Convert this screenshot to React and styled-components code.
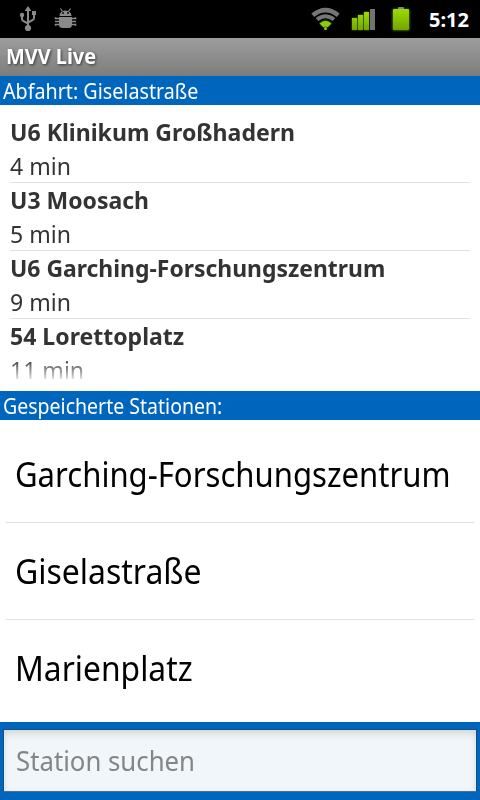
import React from "react";
import styled, { createGlobalStyle } from "styled-components";

const Global = createGlobalStyle`
  * { box-sizing: border-box; }
  body { margin: 0; background: #fff; font-family: "Noto Sans", sans-serif; }
`;

const Screen = styled.div`
  width: 480px;
  height: 800px;
  display: flex;
  flex-direction: column;
  overflow: hidden;
  background: #fff;
`;

/* Condenses a label horizontally to the narrower Android letterforms. */
const Fit = styled.span`
  display: inline-block;
  white-space: nowrap;
  transform-origin: left center;
  transform: scaleX(${p => p.$s});
`;

const Status = styled.header`
  height: 38px;
  background: #000;
  color: #fff;
  display: flex;
  justify-content: space-between;
  padding: 0 9px 0 18px;
`;

const IconGroup = styled.div`
  display: flex;
  gap: ${p => p.$gap || 0}px;
`;

const Glyph = styled.svg`
  display: block;
  width: ${p => p.$w}px;
  height: 38px;
  overflow: visible;
`;

const Clock = styled.time`
  width: 42px;
  margin-left: 3px;
  font-size: 20px;
  font-weight: 700;
  line-height: 39px;
`;

const Title = styled.h1`
  margin: 0;
  height: 38px;
  padding-left: 6px;
  font-size: 21px;
  line-height: 37px;
  color: #fff;
  text-shadow: 1px 1px 3px rgba(0, 0, 0, 0.6);
  background: linear-gradient(#9d9d9d, #7d7d7d);
`;

const Bar = styled.h2`
  margin: 0;
  height: 29px;
  padding-left: 3px;
  font-size: 21px;
  font-weight: 400;
  line-height: 30px;
  color: #fff;
  background: #0065bd;
`;

const Departures = styled.ul`
  margin: 0;
  padding: 10px 10px 0;
  list-style: none;
  height: 286px;
  overflow: hidden;
  mask-image: linear-gradient(#000 254px, rgba(0, 0, 0, 0.12) 275px, transparent 276px);
`;

const Departure = styled.li`
  height: 68px;
  border-bottom: 1px solid #e1e1e1;
  font-size: 24px;
  line-height: 34px;
  color: #333;
`;

const Line = styled.div`
  height: 34px;
  font-weight: ${p => (p.$bold ? 700 : 400)};
`;

const Stations = styled.ul`
  margin: 0;
  padding: 6px 6px 0;
  list-style: none;
  height: 302px;
`;

const Station = styled.li`
  height: 97px;
  padding-left: 9px;
  font-size: 34px;
  line-height: 96px;
  color: #000;
  border-bottom: 1px solid #e1e1e1;
  &:last-child { border-bottom: 0; }
`;

const SearchBar = styled.div`
  height: 78px;
  padding: 7px 3px 8px;
  background: #0065bd;
`;

const Field = styled.div`
  height: 63px;
  padding-left: 12px;
  border: 1px solid #174d80;
  border-bottom-color: #4a7093;
  background: #f1f6fb;
  box-shadow: inset 0 5px 9px -2px rgba(90, 90, 60, 0.2), inset 0 0 7px rgba(90, 90, 60, 0.06);
  font-size: 27px;
  line-height: 62px;
  color: #858585;
`;

const departures = [
  { line: "U6 Klinikum Großhadern", time: "4 min", s: 0.961 },
  { line: "U3 Moosach", time: "5 min", s: 0.958 },
  { line: "U6 Garching-Forschungszentrum", time: "9 min", s: 0.955 },
  { line: "54 Lorettoplatz", time: "11 min", s: 0.96 },
];

const stations = [
  { name: "Garching-Forschungszentrum", s: 0.914 },
  { name: "Giselastraße", s: 0.94 },
  { name: "Marienplatz", s: 0.935 },
];

const Usb = () => (
  <Glyph $w={20} viewBox="18 0 20 38" fill="#8a8a8a">
    <path d="M28 6l3.400 5h-6.800z" />
    <path d="M28 9v17M22 16v3q0 1.500 1.500 2.200L28 23.500M34 14v4q0 1.500-1.500 2.200L28 22.500" fill="none" stroke="#8a8a8a" strokeWidth="2" />
    <circle cx="22" cy="15" r="2.200" />
    <path d="M32 11h4v4h-4z" />
    <circle cx="28" cy="28" r="3.100" />
  </Glyph>
);

const Bug = () => (
  <Glyph $w={22} viewBox="55 0 22 38" fill="#8a8a8a">
    <path d="M59.500 16a6 5.500 0 0 1 12 0z" />
    <path d="M62.500 11.500l-2-3M68.500 11.500l2-3" stroke="#8a8a8a" strokeWidth="1.200" />
    <path d="M59 17h13v7.500q0 3.500-3.500 3.500h-6q-3.500 0-3.500-3.500z" />
    <path d="M59 18.500h-3.500v-1.200M59 21.500h-4M59 24.500h-3.500v1.200M72 18.500h3.500v-1.200M72 21.500h4M72 24.500h3.500v1.200" fill="none" stroke="#8a8a8a" strokeWidth="1.600" />
    <circle cx="63" cy="13" r=".9" fill="#000" />
    <circle cx="68" cy="13" r=".9" fill="#000" />
  </Glyph>
);

const Glow = ({ id }) => (
  <defs>
    <linearGradient id={id + "-fill"} x1="0" y1="0" x2="0" y2="1">
      <stop offset="0" stopColor="#9bdc00" />
      <stop offset="1" stopColor="#73a500" />
    </linearGradient>
    <filter id={id + "-blur"} x="-50%" y="-50%" width="200%" height="200%">
      <feGaussianBlur stdDeviation="1.300" />
    </filter>
  </defs>
);

const Wifi = () => (
  <Glyph $w={30} viewBox="311 0 30 38">
    <Glow id="wifi" />
    <path d="M325.500 29l-6-6q6-5 12 0z" fill="#6fa800" opacity=".6" filter="url(#wifi-blur)" />
    <g fill="none" stroke="#767676">
      <path d="M312.800 15.200q12.700-10 25.400 0" strokeWidth="4.600" />
      <path d="M317 19.500q8.500-6.600 17 0" strokeWidth="4" />
    </g>
    <path d="M319.500 23.500q6-5.500 12 0l-3.800 3.800q-2.200-1.700-4.400 0z" fill="#8ccc00" />
    <circle cx="325.500" cy="28.500" r="1.500" fill="#8ccc00" />
  </Glyph>
);

const bars = "M352 18h5v12h-5zM358 15h5v15h-5zM364 12h5v18h-5z";
const Signal = () => (
  <Glyph $w={24} viewBox="352 0 24 38">
    <Glow id="signal" />
    <path d={bars} fill="#78b800" opacity=".7" filter="url(#signal-blur)" />
    <path d={bars} fill="url(#signal-fill)" />
    <path d="M370 9h5v21h-5z" fill="#737373" />
  </Glyph>
);

const Battery = () => (
  <Glyph $w={18} viewBox="392 0 18 38">
    <Glow id="battery" />
    <rect x="392.500" y="9" width="17" height="21.500" rx="1" fill="#78b800" opacity=".7" filter="url(#battery-blur)" />
    <rect x="398" y="7" width="6" height="3" rx="1" fill="#858585" />
    <rect x="393" y="9" width="16" height="21" rx="1" fill="url(#battery-fill)" />
  </Glyph>
);

export default function App() {
  return (
    <Screen>
      <Global />
      <Status>
        <IconGroup $gap={17}><Usb /><Bug /></IconGroup>
        <IconGroup $gap={16}>
          <IconGroup $gap={11}><Wifi /><Signal /></IconGroup>
          <Battery />
          <Clock>5:12</Clock>
        </IconGroup>
      </Status>
      <Title><Fit $s={0.947}>MVV Live</Fit></Title>
      <Bar><Fit $s={0.938}>Abfahrt: Giselastraße</Fit></Bar>
      <Departures>
        {departures.map(d => (
          <Departure key={d.line}>
            <Line $bold><Fit $s={d.s}>{d.line}</Fit></Line>
            <Line><Fit $s={0.96}>{d.time}</Fit></Line>
          </Departure>
        ))}
      </Departures>
      <Bar><Fit $s={0.93}>Gespeicherte Stationen:</Fit></Bar>
      <Stations>
        {stations.map(s => <Station key={s.name}><Fit $s={s.s}>{s.name}</Fit></Station>)}
      </Stations>
      <SearchBar><Field><Fit $s={0.954}>Station suchen</Fit></Field></SearchBar>
    </Screen>
  );
}
